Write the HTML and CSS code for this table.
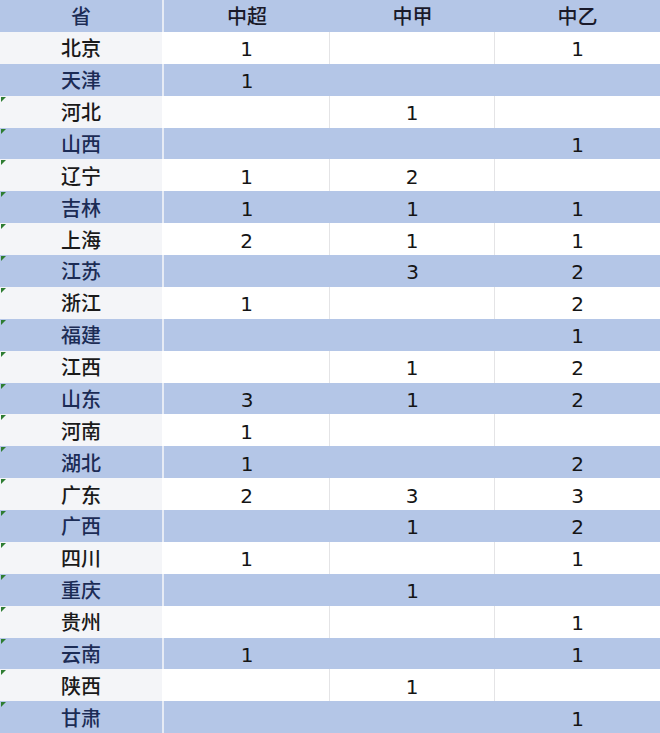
FILE: index.html
```html
<!DOCTYPE html>
<html lang="zh">
<head>
<meta charset="utf-8">
<link rel="stylesheet" href="styles.css">
</head>
<body>
<div class="sheet">
  <div class="row blue head"><div class="c first">省</div><div class="c">中超</div><div class="c">中甲</div><div class="c">中乙</div></div>
  <div class="row white"><div class="c first">北京</div><div class="c">1</div><div class="c"></div><div class="c">1</div></div>
  <div class="row blue"><div class="c first">天津</div><div class="c">1</div><div class="c"></div><div class="c"></div></div>
  <div class="row white"><div class="c first flag">河北</div><div class="c"></div><div class="c">1</div><div class="c"></div></div>
  <div class="row blue"><div class="c first flag">山西</div><div class="c"></div><div class="c"></div><div class="c">1</div></div>
  <div class="row white"><div class="c first flag">辽宁</div><div class="c">1</div><div class="c">2</div><div class="c"></div></div>
  <div class="row blue"><div class="c first flag">吉林</div><div class="c">1</div><div class="c">1</div><div class="c">1</div></div>
  <div class="row white"><div class="c first flag">上海</div><div class="c">2</div><div class="c">1</div><div class="c">1</div></div>
  <div class="row blue"><div class="c first flag">江苏</div><div class="c"></div><div class="c">3</div><div class="c">2</div></div>
  <div class="row white"><div class="c first flag">浙江</div><div class="c">1</div><div class="c"></div><div class="c">2</div></div>
  <div class="row blue"><div class="c first flag">福建</div><div class="c"></div><div class="c"></div><div class="c">1</div></div>
  <div class="row white"><div class="c first flag">江西</div><div class="c"></div><div class="c">1</div><div class="c">2</div></div>
  <div class="row blue"><div class="c first flag">山东</div><div class="c">3</div><div class="c">1</div><div class="c">2</div></div>
  <div class="row white"><div class="c first flag">河南</div><div class="c">1</div><div class="c"></div><div class="c"></div></div>
  <div class="row blue"><div class="c first flag">湖北</div><div class="c">1</div><div class="c"></div><div class="c">2</div></div>
  <div class="row white"><div class="c first flag">广东</div><div class="c">2</div><div class="c">3</div><div class="c">3</div></div>
  <div class="row blue"><div class="c first flag">广西</div><div class="c"></div><div class="c">1</div><div class="c">2</div></div>
  <div class="row white"><div class="c first flag">四川</div><div class="c">1</div><div class="c"></div><div class="c">1</div></div>
  <div class="row blue"><div class="c first flag">重庆</div><div class="c"></div><div class="c">1</div><div class="c"></div></div>
  <div class="row white"><div class="c first flag">贵州</div><div class="c"></div><div class="c"></div><div class="c">1</div></div>
  <div class="row blue"><div class="c first flag">云南</div><div class="c">1</div><div class="c"></div><div class="c">1</div></div>
  <div class="row white"><div class="c first flag">陕西</div><div class="c"></div><div class="c">1</div><div class="c"></div></div>
  <div class="row blue"><div class="c first flag">甘肃</div><div class="c"></div><div class="c"></div><div class="c">1</div></div>
</div>
</body>
</html>
```
FILE: styles.css
```css
html, body {
  margin: 0;
  padding: 0;
  background: #ffffff;
}
.sheet {
  width: 660px;
  height: 733px;
  display: flex;
  flex-direction: column;
  font-family: "DejaVu Sans", "Noto Sans CJK SC", sans-serif;
  font-size: 20px;
  font-weight: 500;
  color: #151515;
}
.row {
  flex: 1;
  display: grid;
  grid-template-columns: 164px 166px 165px 165px;
}
.c {
  display: flex;
  align-items: center;
  justify-content: center;
  line-height: 1;
  padding-top: 3px;
  position: relative;
}
.row.blue {
  background: #b4c6e7;
}
.row.blue .first {
  border-right: 2px solid #e6ebf5;
  color: #1c2c55;
}
.row.white .first {
  background: #f4f5f8;
  border-right: 2px solid #ffffff;
  color: #1a1a1a;
}
.row.white .c:not(.first) {
  border-right: 1px solid #e4e4e6;
}
.row.white .c:last-child {
  border-right: none;
}
.head .c {
  color: #1a1a2a;
}
.head .first {
  color: #1c2c55;
}
.flag::before {
  content: "";
  position: absolute;
  left: 1px;
  top: 1px;
  width: 0;
  height: 0;
  border-top: 5px solid #2e7d32;
  border-right: 5px solid transparent;
}
```
